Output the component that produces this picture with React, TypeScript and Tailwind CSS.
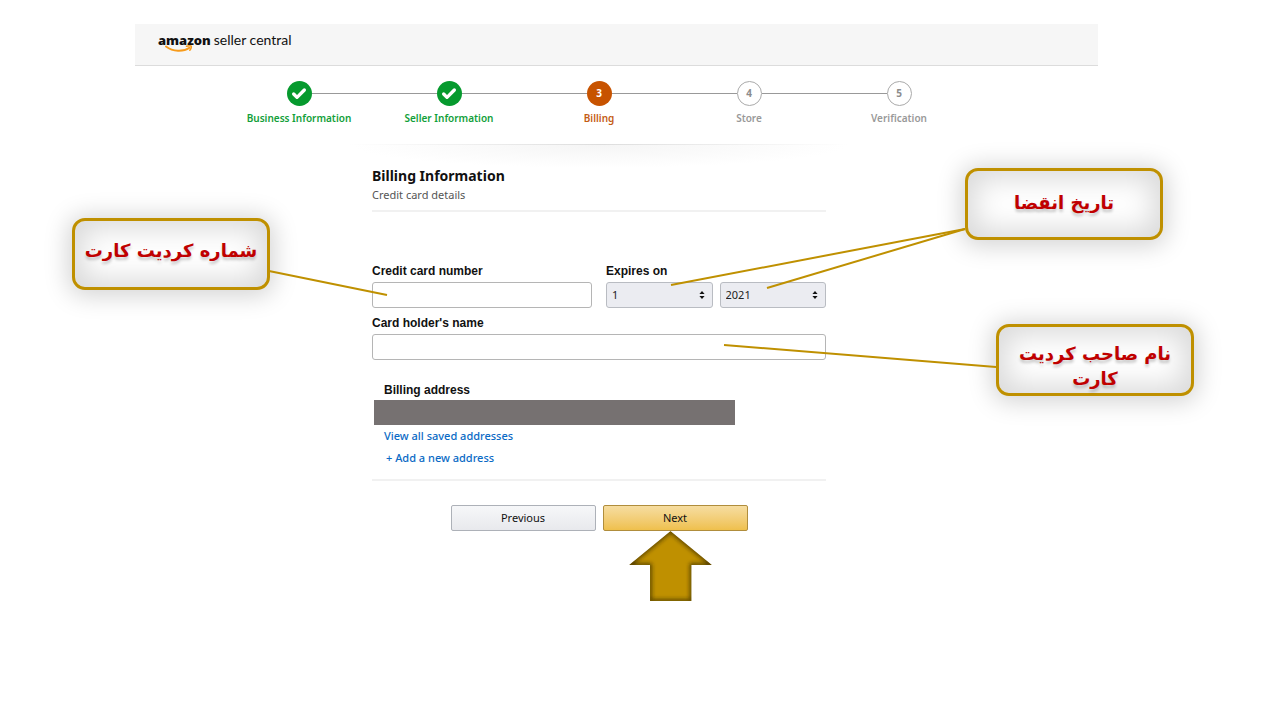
import { Check } from "lucide-react";
import type { ReactNode } from "react";

type StepState = "done" | "current" | "todo";

const steps: { label: string; state: StepState }[] = [
  { label: "Business Information", state: "done" },
  { label: "Seller Information", state: "done" },
  { label: "Billing", state: "current" },
  { label: "Store", state: "todo" },
  { label: "Verification", state: "todo" },
];

const circleStyles: Record<StepState, string> = {
  done: "bg-[#069a2e] text-white",
  current: "bg-[#c75300] text-white",
  todo: "border border-[#aaa] bg-white text-[#8c8c8c]",
};

const labelStyles: Record<StepState, string> = {
  done: "text-[#12a03a]",
  current: "text-[#c45c14]",
  todo: "text-[#999]",
};

function Logo() {
  return (
    <a href="#" className="flex items-baseline gap-[3px] leading-5 text-[#111]">
      <span className="relative font-['Noto_Sans'] text-[13px] font-black">
        amazon
        <svg viewBox="0 0 28 8" className="absolute top-[15px] left-[7px] h-2 w-7" fill="none" stroke="#f79b1b">
          <path d="M1 1.500c7 5.300 17 5.700 23.500 1.200" strokeWidth="2" strokeLinecap="round" />
          <path d="M21.500 1.300c2-.6 4.200-.6 4.700-.2.400.6-.2 2.900-1.400 4.200" strokeWidth="1.500" strokeLinecap="round" />
        </svg>
      </span>
      <span className="font-['Lato'] text-[14px]">seller central</span>
    </a>
  );
}

function Stepper() {
  return (
    <ol className="grid w-[750px] grid-cols-5 font-['Noto_Sans'] text-[10px] font-semibold">
      {steps.map((step, i) => (
        <li key={step.label} className="flex flex-col items-center gap-1">
          <div className="flex w-full items-center">
            <span className={i === 0 ? "h-px flex-1" : "h-px flex-1 bg-[#999]"} />
            <span
              className={`flex size-[25px] items-center justify-center rounded-full font-bold ${circleStyles[step.state]}`}
            >
              {step.state === "done" ? <Check className="size-4" strokeWidth={5} /> : i + 1}
            </span>
            <span className={i === steps.length - 1 ? "h-px flex-1" : "h-px flex-1 bg-[#999]"} />
          </div>
          <span className={`leading-4 ${labelStyles[step.state]}`}>{step.label}</span>
        </li>
      ))}
    </ol>
  );
}

function Select({ id, label, value }: { id: string; label: string; value: string }) {
  return (
    <div className="relative flex-1">
      <select
        id={id}
        aria-label={label}
        defaultValue={value}
        className="h-[26px] w-full appearance-none rounded-[3px] border border-[#b9bcc2] bg-[#ebecf1] px-[5px] font-['Noto_Sans'] text-[11px] font-normal text-[#222]"
      >
        <option>{value}</option>
      </select>
      <svg viewBox="0 0 6 8" className="pointer-events-none absolute top-[9px] right-2 h-2 w-1.5" fill="#111">
        <path d="M3 0 5.600 3H.4zM3 8 .4 5h5.200z" />
      </svg>
    </div>
  );
}

function Callout({ className, children }: { className: string; children: ReactNode }) {
  return (
    <div
      dir="rtl"
      className={`absolute flex h-[72px] w-[198px] items-center justify-center rounded-[13px] border-3 border-[#bf9000] bg-white px-2 text-center font-['DejaVu_Sans'] text-[18px] leading-[25px] font-bold text-[#c00000] shadow-[inset_0_0_28px_8px_#dadada,0_2px_24px_4px_#d4d4d4] text-shadow-[0_3px_3px_#00000033] ${className}`}
    >
      {children}
    </div>
  );
}

// Callouts are anchored to the form, so they follow the fields they point at.
function Annotations() {
  return (
    <div className="pointer-events-none absolute top-0 left-0">
      <Callout className="top-[50px] left-[-300px] pb-2">
        <span className="whitespace-nowrap">شماره کردیت کارت</span>
      </Callout>
      <Callout className="top-0 left-[593px] pb-1">تاریخ انقضا</Callout>
      <Callout className="top-[156px] left-[624px] pt-3">نام صاحب کردیت کارت</Callout>
      <svg className="absolute top-0 left-0 h-px w-px overflow-visible" fill="none" stroke="#bf9000" strokeWidth="2">
        <path d="M-103 103 15 127" />
        <path d="M593 61 299 117" />
        <path d="M593 61 395 120" />
        <path d="M624 199 352 177" />
      </svg>
      <svg viewBox="0 0 84 70" className="absolute top-[363px] left-[257px] h-[70px] w-[84px]">
        <defs>
          <clipPath id="arrow-clip">
            <path d="M41.500 0 83 34H62.500V70H21V34H0z" />
          </clipPath>
          <filter id="arrow-blur">
            <feGaussianBlur stdDeviation="2" />
          </filter>
        </defs>
        <g clipPath="url(#arrow-clip)">
          <path d="M41.500 0 83 34H62.500V70H21V34H0z" fill="#bf9000" />
          <path
            d="M41.500 0 83 34H62.500V70H21V34H0z"
            fill="none"
            stroke="#2b2000"
            strokeWidth="2.500"
            filter="url(#arrow-blur)"
          />
        </g>
      </svg>
    </div>
  );
}

function BillingForm() {
  return (
    <form className="relative w-[454px]" onSubmit={(e) => e.preventDefault()}>
      <div className="border-b-2 border-[#f1f1f1] pb-[7px] font-['Noto_Sans']">
        <h1 className="text-[14px] leading-4 font-bold text-[#111]">Billing Information</h1>
        <p className="mt-[3px] text-[11px] leading-4 text-[#555]">Credit card details</p>
      </div>

      <div className="mt-[51px] flex gap-[14px] font-['Liberation_Sans'] text-[12px] leading-4 font-bold text-[#111]">
        <div className="flex w-[220px] flex-col gap-[3px]">
          <label htmlFor="card-number">Credit card number</label>
          <input id="card-number" className="h-[26px] rounded-[3px] border border-[#b5b5b5] px-2 font-normal" />
        </div>
        <div className="flex flex-1 flex-col gap-[3px]">
          <label htmlFor="month">Expires on</label>
          <div className="flex gap-[7px]">
            <Select id="month" label="Expiry month" value="1" />
            <Select id="year" label="Expiry year" value="2021" />
          </div>
        </div>
      </div>

      <div className="mt-[7px] flex flex-col gap-[3px] font-['Liberation_Sans'] text-[12px] leading-4 font-bold text-[#111]">
        <label htmlFor="holder">Card holder's name</label>
        <input id="holder" className="h-[26px] rounded-[3px] border border-[#b5b5b5] px-2 font-normal" />
      </div>

      <div className="mt-[22px] flex flex-col items-start border-b-2 border-[#f1f1f1] pb-[13px] font-['Noto_Sans'] text-[11px] leading-4 font-medium text-[#0a6ac5]">
        <h2 className="pl-3 font-['Liberation_Sans'] text-[12px] leading-4 font-bold text-[#111]">Billing address</h2>
        <div className="mt-[2px] ml-[2px] h-[25px] w-[361px] bg-[#767171]" />
        <a href="#" className="mt-[3px] ml-3">View all saved addresses</a>
        <a href="#" className="mt-[6px] ml-[14px]">+ Add a new address</a>
      </div>

      <div className="mt-6 flex justify-center gap-[7px] font-['Noto_Sans'] text-[11px] text-[#111]">
        <button
          type="button"
          className="h-[26px] w-[145px] rounded-[2px] border border-[#adb1b8] bg-linear-to-b from-[#f6f7f9] to-[#e8e9ed]"
        >
          Previous
        </button>
        <button
          type="submit"
          className="h-[26px] w-[145px] rounded-[2px] border border-[#b08d3c] bg-linear-to-b from-[#f6dda0] to-[#efc04c]"
        >
          Next
        </button>
      </div>

      <Annotations />
    </form>
  );
}

export default function App() {
  return (
    <div className="min-h-screen overflow-x-hidden bg-white pt-6 pb-[120px]">
      <header className="mr-[182px] ml-[135px] h-[42px] border-b border-[#dcdcdc] bg-[#f6f6f6] px-[23px] pt-[6px]">
        <Logo />
      </header>
      <main className="flex flex-col items-center pt-[15px] pr-[82px]">
        <Stepper />
        <div className="mt-[18px] flex w-[500px] flex-col">
          <div className="h-px bg-linear-to-r from-transparent via-[#ddd] to-transparent" />
          <div className="h-[23px] bg-[radial-gradient(ellipse_at_top,#f5f5f5,transparent_70%)]" />
        </div>
        <BillingForm />
      </main>
    </div>
  );
}
